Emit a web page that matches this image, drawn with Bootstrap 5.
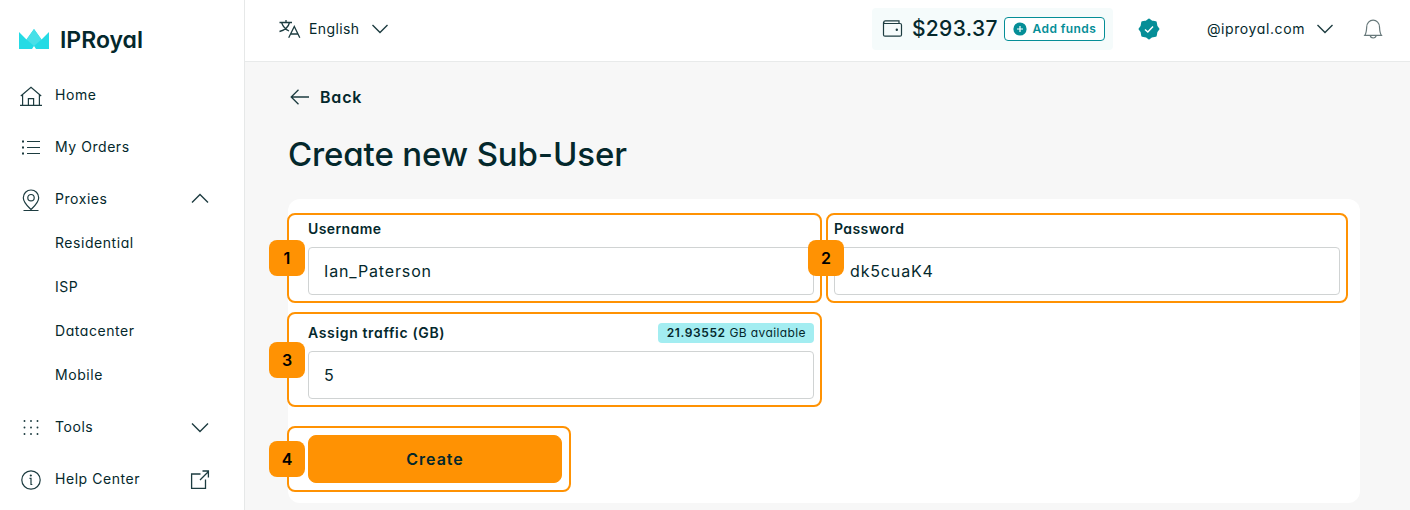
<!DOCTYPE html>
<html lang="en">
<head>
<meta charset="utf-8">
<meta name="viewport" content="width=device-width, initial-scale=1">
<title>IPRoyal – Create new Sub-User</title>
<link href="https://cdn.jsdelivr.net/npm/bootstrap@5.3.0/dist/css/bootstrap.min.css" rel="stylesheet">
<style>
  :root { --ink: #04282c; --teal: #058e97; --orange: #ff9203; }
  body { font-family: Inter, "Noto Sans", sans-serif; font-feature-settings: "cv11"; color: var(--ink); font-size: 14px; line-height: 20px; letter-spacing: .55px; background: #f7f7f7; height: 510px; overflow: hidden; }
  svg { display: block; flex: none; fill: none; stroke: #1d3c40; stroke-width: 1.2; }
  .sidebar { width: 245px; background: #fff; border-right: 1px solid #e6e8e8; padding: 0 32px 0 19px; }
  .brand { height: 69px; padding-top: 11px; gap: 11px; font-size: 23px; font-weight: 600; letter-spacing: 0; }
  .brand svg { stroke: none; position: relative; top: -1px; }
  .side-link { height: 52px; gap: 12px; color: inherit; text-decoration: none; }
  .side-link svg:first-child { position: relative; top: 1px; }
  .side-sub { margin: -4px 0 4px; padding-left: 36px; }
  .side-sub a { height: 44px; color: inherit; text-decoration: none; }
  .topbar { height: 62px; padding: 0 22px 4px 34px; background: #fff; border-bottom: 1px solid #e8eaea; }
  .lang { gap: 8px; letter-spacing: .4px; }
  .wallet { width: 241px; height: 42px; padding: 0 8px 0 10px; background: #f5fbfb; border-radius: 4px; }
  .amount { font-size: 21px; font-weight: 500; letter-spacing: .35px; margin-left: 9px; }
  .btn-funds { --bs-btn-color: var(--teal); --bs-btn-border-color: var(--teal); --bs-btn-padding-x: 0; --bs-btn-padding-y: 0; width: 101px; height: 24px; font-size: 12px; font-weight: 600; line-height: 20px; letter-spacing: .4px; border-radius: 4px; background: #fff; gap: 6px; }
  .verified { margin-left: 25px; margin-right: 47px; stroke: none; }
  .account { letter-spacing: .6px; }
  .bell { margin-left: 25px; stroke: #68797b; }
  .content-area { padding: 25px 50px 0 43px; }
  .back { font-size: 16px; font-weight: 600; letter-spacing: .8px; gap: 10px; color: inherit; text-decoration: none; }
  .title { font-size: 33px; line-height: 40px; font-weight: 500; letter-spacing: -.13px; margin: 23px 0 25px; }
  .form-panel { height: 304px; padding: 20px; background: #fff; border-radius: 12px; }
  .fields { display: grid; grid-template-columns: 1fr 1fr; gap: 28px 20px; }
  .field-label { font-weight: 600; letter-spacing: .4px; height: 20px; margin-bottom: 8px; }
  .field-label .wide { letter-spacing: .65px; }
  .form-control, .form-control:focus { font-size: 16px; height: 48px; padding: 0 15px; border: 1px solid #d0d3d3; border-radius: 4px; color: var(--ink); letter-spacing: .85px; box-shadow: none; }
  .avail { font-size: 12px; background: #a3edf1; border-radius: 4px; padding: 0 8px 0 9px; letter-spacing: .4px; }
  .avail b { font-weight: 600; letter-spacing: .6px; }
  .btn-create { --bs-btn-bg: var(--orange); --bs-btn-color: var(--ink); --bs-btn-border-color: var(--orange); width: 254px; height: 48px; font-size: 16px; font-weight: 600; letter-spacing: 1px; border-radius: 8px; }
  .create-row { width: 254px; margin-top: 36px; }
  .callout { position: absolute; inset: -6px -8px -8px -21px; border: 2px solid var(--orange); border-radius: 8px; pointer-events: none; }
  .callout.tight { left: -8px; }
  .callout.tall { top: -11px; }
  .callout.button-box { top: -9px; right: -9px; bottom: -9px; }
  .step { position: absolute; left: -20px; top: 50%; margin-top: -18px; width: 36px; height: 36px; border-radius: 8px; background: var(--orange); color: #000; font-size: 16px; font-weight: 600; letter-spacing: 0; }
</style>
</head>
<body>
<div class="d-flex h-100">
  <nav class="sidebar flex-shrink-0">
    <div class="brand d-flex align-items-center">
      <svg width="30" height="20" viewBox="0 0 30 20"><path fill="#24dbe5" d="M0 3 7.500 10.500 15 0 22.500 10.500 30 3V20H17L15 17 13 20H0Z"/><path fill="#48e0e8" d="M7.500 10.500 15 0 22.500 10.500 15 17Z"/></svg>
      <span>IPRoyal</span>
    </div>
    <a href="#" class="side-link d-flex align-items-center">
      <svg width="24" height="24" viewBox="0 0 24 24"><path d="M1 21.400H23M3.600 21V10.500M20.400 21V10.500M1.800 12 12 3.200 22.200 12M9.400 21V14.600H14.600V21"/></svg>
      <span>Home</span>
    </a>
    <a href="#" class="side-link d-flex align-items-center">
      <svg width="24" height="24" viewBox="0 0 24 24"><path d="M8 5.500H21M8 11.500H21M8 17.500H21"/><path d="M3 5.500H5M3 11.500H5M3 17.500H5" stroke-width="1.800"/></svg>
      <span>My Orders</span>
    </a>
    <a href="#" class="side-link d-flex align-items-center">
      <svg width="24" height="24" viewBox="0 0 24 24"><path d="M12 21.500C9 18.500 4.300 14.500 4.300 9.700a7.700 7.700 0 0 1 15.400 0C19.700 14.500 15 18.500 12 21.500ZM4.500 22.500H19.500"/><circle cx="12" cy="9.700" r="3.200"/></svg>
      <span class="flex-grow-1">Proxies</span>
      <svg width="24" height="24" viewBox="0 0 24 24"><path d="M4 15.500 12 7.500 20 15.500" stroke-width="1.400"/></svg>
    </a>
    <div class="side-sub d-flex flex-column">
      <a href="#" class="d-flex align-items-center">Residential</a>
      <a href="#" class="d-flex align-items-center">ISP</a>
      <a href="#" class="d-flex align-items-center">Datacenter</a>
      <a href="#" class="d-flex align-items-center">Mobile</a>
    </div>
    <a href="#" class="side-link d-flex align-items-center">
      <svg width="24" height="24" viewBox="0 0 24 24"><path stroke-width="1.900" stroke-linecap="round" d="M5.500 5h.01M12 5h.01M18.500 5h.01M5.500 11.500h.01M12 11.500h.01M18.500 11.500h.01M5.500 18h.01M12 18h.01M18.500 18h.01"/></svg>
      <span class="flex-grow-1">Tools</span>
      <svg width="24" height="24" viewBox="0 0 24 24"><path d="M4 8.500 12 16.500 20 8.500" stroke-width="1.400"/></svg>
    </a>
    <a href="#" class="side-link d-flex align-items-center">
      <svg width="24" height="24" viewBox="0 0 24 24"><circle cx="12" cy="12" r="9.200"/><path d="M10.500 10.300H12V16.500H13.300"/><circle cx="11.800" cy="7.500" r=".5" fill="#1d3c40"/></svg>
      <span class="flex-grow-1">Help Center</span>
      <svg width="24" height="26" viewBox="0 0 24 26"><path d="M12.500 8H3.600V22.400H17.500V13.500M12 14 20.500 5.500M14.500 5H20.400V11.500" stroke-width="1.300"/></svg>
    </a>
  </nav>

  <div class="flex-grow-1">
    <header class="topbar d-flex align-items-center">
      <div class="lang d-flex align-items-center">
        <svg width="22" height="22" viewBox="0 0 22 22"><path d="M.500 4.500H13M7 2V4.500M2.500 4.500C4.200 9 6.700 11.500 10 13M10.500 4.500C9.500 9 6 12 .500 13.500M9.700 19.700 15.300 8.500 20.800 19.700M11.500 16H19" stroke-width="1.300"/></svg>
        <span>English</span>
        <svg class="ms-1" width="16" height="10" viewBox="0 0 16 10"><path d="M.500 1 8 8.500 15.500 1" stroke-width="1.400"/></svg>
      </div>
      <div class="wallet d-flex align-items-center ms-auto">
        <svg width="21" height="20" viewBox="0 0 21 20"><path d="M17 4.500V1.900H3.500A2 2 0 0 0 1.500 3.500V15.700A1.500 1.500 0 0 0 3 17.200H18A1.500 1.500 0 0 0 19.500 15.700V6A1.500 1.500 0 0 0 18 4.500H3A1.500 1.500 0 0 1 1.500 3.200"/><circle cx="14.800" cy="10.700" r=".6" fill="#1d3c40"/></svg>
        <span class="amount">$293.37</span>
        <button type="button" class="btn btn-funds d-flex align-items-center justify-content-center ms-auto">
          <svg width="14" height="14" viewBox="0 0 14 14"><circle cx="7" cy="7" r="6.600" fill="#058e97" stroke="none"/><path d="M4 7H10M7 4V10" stroke="#fff"/></svg>
          Add funds
        </button>
      </div>
      <svg class="verified" width="22" height="22" viewBox="0 0 22 22"><path fill="#058e97" stroke="#058e97" stroke-width="2" stroke-linejoin="round" d="M11 1.500 13.600 3.500 17.700 4.300 18.500 8.400 20.500 11 18.500 13.600 17.700 17.700 13.600 18.500 11 20.500 8.400 18.500 4.300 17.700 3.500 13.600 1.500 11 3.500 8.400 4.300 4.300 8.400 3.500Z"/><path d="M7 11.500 9.800 14 15 8.500" stroke="#fff" stroke-width="1.500"/></svg>
      <div class="d-flex align-items-center gap-2">
        <span class="account">@iproyal.com</span>
        <svg class="ms-1" width="16" height="10" viewBox="0 0 16 10"><path d="M.500 1 8 8.500 15.500 1" stroke-width="1.400"/></svg>
      </div>
      <svg class="bell" width="30" height="22" viewBox="0 0 30 22"><path d="M6.800 17.300C8.300 15.500 8.500 13 8.700 9A6.400 6.900 0 0 1 21.500 9C21.700 13 21.900 15.500 23.400 17.300ZM12.300 17.300C12.300 20.900 18.100 20.900 18.100 17.300"/></svg>
    </header>

    <main class="content-area">
      <a href="#" class="back d-inline-flex align-items-center">
        <svg width="22" height="18" viewBox="0 0 22 18"><path d="M21 9H3.500M10.500 1.700 3.200 9 10.500 16.300" stroke-width="1.300"/></svg>
        <span>Back</span>
      </a>
      <h1 class="title">Create new Sub-User</h1>

      <form class="form-panel">
        <div class="fields">
          <div class="position-relative">
            <div class="field-label">Username</div>
            <input class="form-control" type="text" aria-label="Username" value="Ian_Paterson">
            <div class="callout"><span class="step d-flex align-items-center justify-content-center">1</span></div>
          </div>
          <div class="position-relative">
            <div class="field-label">Password</div>
            <input class="form-control" type="text" aria-label="Password" value="dk5cuaK4">
            <div class="callout tight"><span class="step d-flex align-items-center justify-content-center">2</span></div>
          </div>
          <div class="position-relative">
            <div class="field-label d-flex justify-content-between">
              <span class="wide">Assign traffic (GB)</span>
              <span class="avail fw-normal"><b>21.93552</b> GB available</span>
            </div>
            <input class="form-control" type="text" aria-label="Assign traffic" value="5">
            <div class="callout tall"><span class="step d-flex align-items-center justify-content-center">3</span></div>
          </div>
        </div>
        <div class="create-row position-relative">
          <button type="button" class="btn btn-create">Create</button>
          <div class="callout button-box"><span class="step d-flex align-items-center justify-content-center">4</span></div>
        </div>
      </form>
    </main>
  </div>
</div>
<script src="https://cdn.jsdelivr.net/npm/bootstrap@5.3.0/dist/js/bootstrap.bundle.min.js"></script>
</body>
</html>
